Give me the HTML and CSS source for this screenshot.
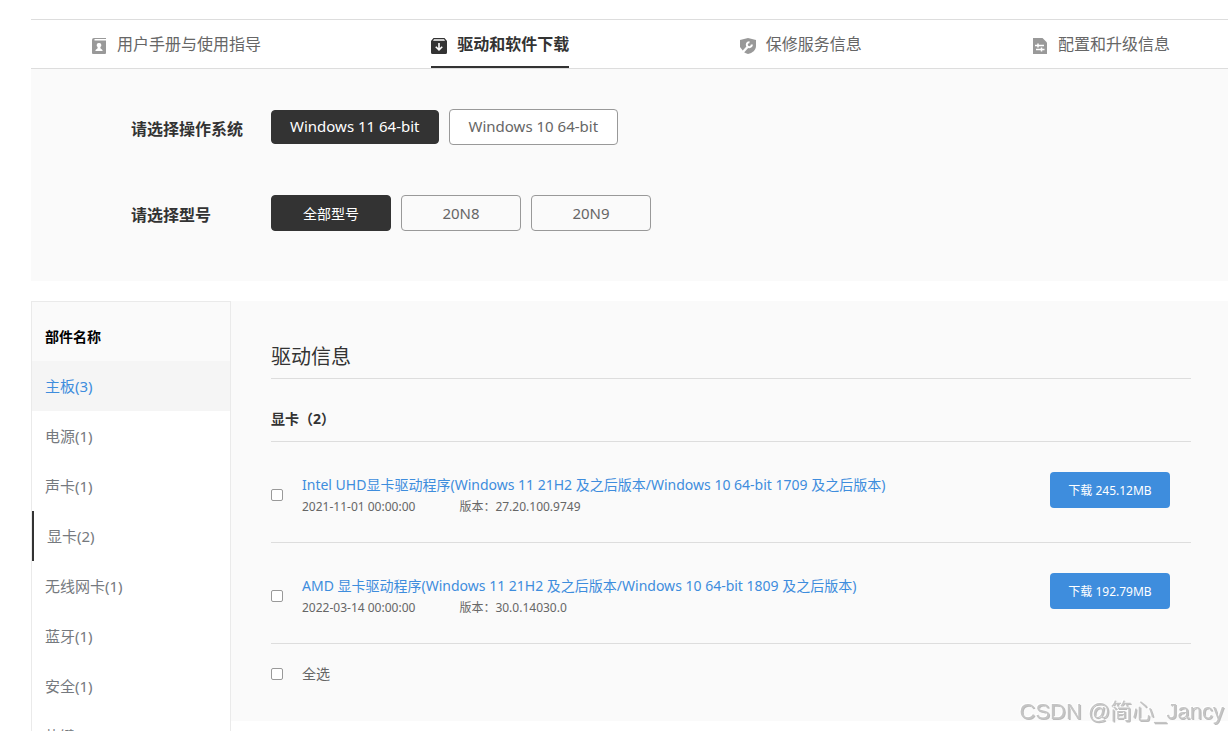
FILE: index.html
```html
<!DOCTYPE html>
<html lang="zh-CN">
<head>
  <meta charset="UTF-8" />
  <meta name="viewport" content="width=device-width, initial-scale=1.0"/>
  <title>驱动和软件下载</title>
  <link rel="stylesheet" href="styles.css">
</head>
<body>
  <div class="page">
    <nav class="tabs">
      <a href="#manual" class="tab">
        <svg viewBox="0 0 16 16" class="icon"><path fill="currentColor" fill-rule="evenodd" d="M3 0h12v1H3.500v1.500H15V15a1 1 0 0 1-1 1H2a1 1 0 0 1-1-1V2a2 2 0 0 1 2-2zM8 5a2.200 2.200 0 0 0-1.400 4v1.300L4.500 12v1h7v-1l-2.100-1.700V9A2.200 2.200 0 0 0 8 5z"/></svg>
        用户手册与使用指导
      </a>
      <a href="#drivers" class="tab active">
        <svg viewBox="0 0 16 16" class="icon"><path fill="currentColor" fill-rule="evenodd" d="M2.500 0h11L16 3v11.500a1.500 1.500 0 0 1-1.500 1.500h-13A1.500 1.500 0 0 1 0 14.500V3zM3 1.300L2 2.800h12l-1-1.500zM7.200 5v5L5.300 8.200 4.200 9.300 8 13l3.800-3.700-1.100-1.100L8.800 10V5z"/></svg>
        驱动和软件下载
      </a>
      <a href="#warranty" class="tab">
        <svg viewBox="0 0 16 16" class="icon"><path fill="currentColor" d="M8 0l8 2v6c0 4-3.500 7-8 8-1.500-.4-2.800-1-3.900-1.700L0 9V2z"/><path fill="none" stroke="#fff" stroke-width="2.400" d="M2.500 14.500l5-5.500"/><path fill="none" stroke="#fff" stroke-width="2" d="M9.500 4.200A2.500 2.500 0 1 0 11.800 6.500"/></svg>
        保修服务信息
      </a>
      <a href="#upgrade" class="tab">
        <svg viewBox="0 0 16 16" class="icon"><path fill="currentColor" d="M1 0h9.500L15 4.500V16H1z"/><path fill="none" stroke="#fff" stroke-width="1.500" d="M3 7.500h9M6 5.500v4M4 11.500h8.500M9.500 9.500v4"/></svg>
        配置和升级信息
      </a>
    </nav>

    <section class="filters">
      <div class="filter-row">
        <h3>请选择操作系统</h3>
        <div class="options">
          <button type="button" class="option os selected">Windows 11 64-bit</button>
          <button type="button" class="option os">Windows 10 64-bit</button>
        </div>
      </div>
      <div class="filter-row">
        <h3>请选择型号</h3>
        <div class="options">
          <button type="button" class="option all selected">全部型号</button>
          <button type="button" class="option">20N8</button>
          <button type="button" class="option">20N9</button>
        </div>
      </div>
    </section>

    <div class="content">
      <aside class="sidebar">
        <h4>部件名称</h4>
        <a href="#p1" class="part hover">主板(3)</a>
        <a href="#p2" class="part">电源(1)</a>
        <a href="#p3" class="part">声卡(1)</a>
        <a href="#p4" class="part current">显卡(2)</a>
        <a href="#p5" class="part">无线网卡(1)</a>
        <a href="#p6" class="part">蓝牙(1)</a>
        <a href="#p7" class="part">安全(1)</a>
        <a href="#p8" class="part">热键(1)</a>
      </aside>

      <main class="drivers">
        <h2>驱动信息</h2>
        <h4>显卡（2）</h4>
        <div class="driver">
          <input type="checkbox" id="driver1" />
          <div class="info">
            <label for="driver1" class="name">Intel UHD显卡驱动程序(Windows 11 21H2 及之后版本/Windows 10 64-bit 1709 及之后版本)</label>
            <p class="meta"><span>2021-11-01 00:00:00</span><span>版本：27.20.100.9749</span></p>
          </div>
          <button type="button" class="download">下载 245.12MB</button>
        </div>
        <div class="driver">
          <input type="checkbox" id="driver2" />
          <div class="info">
            <label for="driver2" class="name">AMD 显卡驱动程序(Windows 11 21H2 及之后版本/Windows 10 64-bit 1809 及之后版本)</label>
            <p class="meta"><span>2022-03-14 00:00:00</span><span>版本：30.0.14030.0</span></p>
          </div>
          <button type="button" class="download">下载 192.79MB</button>
        </div>
        <div class="select-all">
          <input type="checkbox" id="all" />
          <label for="all">全选</label>
        </div>
      </main>
    </div>
  </div>
  <div class="watermark">CSDN @简心_Jancy</div>
</body>
</html>
```
FILE: styles.css
```css
:root {
  --bg: #fafafa;
  --line: #ddd;
  --dark: #333;
  --text: #666;
  --blue: #3e8ddd;
}

* {
  box-sizing: border-box;
}

body {
  margin: 0;
  font-family: 'Noto Sans', 'Noto Sans CJK SC', sans-serif;
  font-size: 14px;
  color: var(--text);
  background: #fff;
}

h2, h3, h4, p {
  margin: 0;
}

a {
  text-decoration: none;
  color: inherit;
}

button {
  font-family: inherit;
  cursor: pointer;
}

.page {
  padding: 19px 0 0 31px;
}

.tabs {
  display: flex;
  justify-content: space-between;
  height: 50px;
  padding: 0 58px 0 60px;
  border-top: 1px solid var(--line);
  border-bottom: 1px solid var(--line);
}

.tab {
  display: flex;
  align-items: center;
  gap: 10px;
  font-size: 16px;
  border-bottom: 2px solid transparent;
}

.tab.active {
  color: var(--dark);
  font-weight: bold;
  border-color: var(--dark);
}

.icon {
  width: 16px;
  height: 16px;
  color: #999;
  margin-top: 6px;
}

.tab.active .icon {
  color: var(--dark);
}

.filters {
  display: flex;
  flex-direction: column;
  gap: 50px;
  padding: 40px 0 50px 100px;
  background: var(--bg);
}

.filter-row {
  display: flex;
  align-items: center;
}

.filter-row h3 {
  width: 140px;
  font-size: 16px;
  line-height: 24px;
  padding-top: 4px;
  color: var(--dark);
}

.options {
  display: flex;
  align-items: center;
  gap: 10px;
}

.option {
  min-width: 120px;
  height: 36px;
  padding: 0;
  font-size: 15px;
  color: var(--text);
  background: transparent;
  border: 1px solid #999;
  border-radius: 4px;
}

.option.all {
  font-size: 14px;
}

.option.os {
  padding: 0 19px 2px;
  background: #fff;
}

.option.selected {
  color: #fff;
  background: var(--dark);
  border-color: var(--dark);
}

.option.os.selected {
  height: 34px;
  padding: 0 18px 2px;
}

.content {
  display: flex;
  align-items: flex-start;
  margin-top: 20px;
}

.sidebar {
  width: 200px;
  flex-shrink: 0;
  border: 1px solid #eaeaea;
}

.sidebar h4 {
  height: 59px;
  padding: 10px 13px 0;
  line-height: 50px;
  font-size: 14px;
  color: #000;
  background: var(--bg);
}

.part {
  display: block;
  padding: 0 13px;
  font-size: 15px;
  line-height: 50px;
  color: #75797e;
}

.part.hover {
  color: var(--blue);
  background: #f5f5f5;
}

.part.current {
  border-left: 2px solid var(--dark);
}

.drivers {
  flex: 1;
  padding: 30px 37px 30px 40px;
  background: var(--bg);
}

.drivers h2 {
  padding: 11px 0 7px;
  font-size: 20px;
  line-height: 29px;
  font-weight: normal;
  color: var(--dark);
  border-bottom: 1px solid var(--line);
}

.drivers h4 {
  padding-top: 18px;
  font-size: 14px;
  line-height: 44px;
  color: var(--dark);
  border-bottom: 1px solid var(--line);
}

.driver {
  display: flex;
  align-items: center;
  height: 101px;
  padding-right: 21px;
  border-bottom: 1px solid var(--line);
}

input[type="checkbox"] {
  appearance: none;
  width: 12px;
  height: 12px;
  margin: 0 19px 0 0;
  background: #fff;
  border: 1px solid #999;
  border-radius: 2px;
}

.driver input {
  margin-top: 6px;
}

.info {
  flex: 1;
  padding-top: 8px;
}

.name {
  display: block;
  font-size: 14px;
  line-height: 22px;
  color: var(--blue);
}

.meta {
  display: flex;
  gap: 44px;
  font-size: 12px;
  line-height: 22px;
}

.download {
  width: 120px;
  height: 36px;
  margin-bottom: 4px;
  padding: 0;
  font-size: 12px;
  color: #fff;
  background: var(--blue);
  border: none;
  border-radius: 4px;
}

.select-all {
  display: flex;
  align-items: center;
  height: 47px;
  padding-top: 12px;
}

.select-all label {
  padding-bottom: 2px;
}

.watermark {
  position: fixed;
  right: 4px;
  bottom: 4px;
  font-family: 'Liberation Sans', 'Noto Sans CJK SC', sans-serif;
  font-size: 22px;
  line-height: 30px;
  color: #c4c4c4;
  text-shadow: -1px -1px 0 #fff, 1px 1px 0 #bbb;
}
```
